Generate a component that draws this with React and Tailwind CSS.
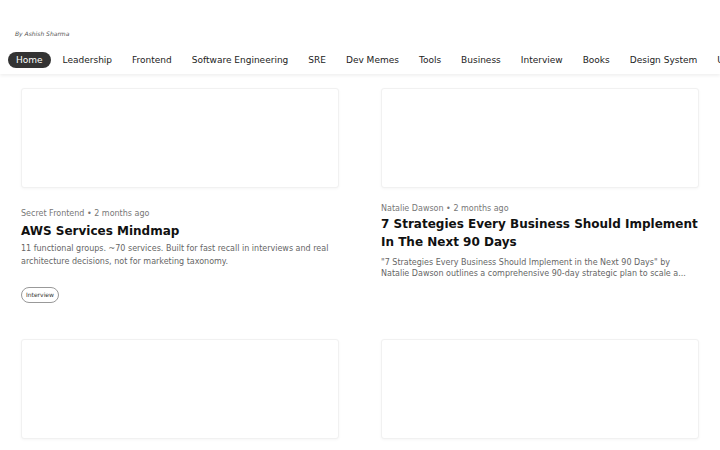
const navItems = [
  'Home',
  'Leadership',
  'Frontend',
  'Software Engineering',
  'SRE',
  'Dev Memes',
  'Tools',
  'Business',
  'Interview',
  'Books',
  'Design System',
  'UI/UX',
];

function Thumb() {
  return (
    <div className="h-[100px] w-full rounded-[3px] border border-[#f1f1f1] bg-white shadow-[0_1px_3px_rgba(0,0,0,0.04)]" />
  );
}

function App() {
  return (
    <div
      className="min-h-screen overflow-hidden bg-white text-[#1a1a1a]"
      style={{ fontFamily: '"DejaVu Sans", sans-serif' }}
    >
      <header>
        <div className="pl-[15px] pt-[30px] pb-[8px] text-[6px] leading-[8px] italic text-[#555]">
          By Ashish Sharma
        </div>
        <nav className="flex h-[28px] items-center gap-1 overflow-hidden whitespace-nowrap bg-white px-2 shadow-[0_2px_3px_rgba(0,0,0,0.06)]">
          {navItems.map((item, i) => (
            <span
              key={item}
              className={`shrink-0 rounded-full px-2 text-[9px] leading-[16px] ${
                i === 0 ? 'bg-[#333] text-white' : 'text-[#222]'
              }`}
            >
              {item}
            </span>
          ))}
        </nav>
      </header>

      <main className="grid grid-cols-[318px_318px] gap-x-[42px] gap-y-[35px] px-[21px] pt-[14px]">
        {/* row 1, left */}
        <article>
          <Thumb />
          <div className="mt-[20px] text-[8px] leading-[12px] text-[#777]">
            Secret Frontend • 2 months ago
          </div>
          <h2 className="mt-[2px] text-[12px] font-bold leading-[18px] text-[#111]">
            AWS Services Mindmap
          </h2>
          <p className="mt-[2px] text-[8px] leading-[13px] text-[#666]">
            11 functional groups. ~70 services. Built for fast recall in interviews and real architecture decisions, not for marketing taxonomy.
          </p>
          <span className="mt-[19px] inline-block rounded-full border border-[#999] px-[4px] text-[6px] leading-[14px] text-[#333]">
            Interview
          </span>
        </article>

        {/* row 1, right */}
        <article>
          <Thumb />
          <div className="mt-[15px] text-[8px] leading-[12px] text-[#777]">
            Natalie Dawson • 2 months ago
          </div>
          <h2 className="text-[12px] font-bold leading-[18px] text-[#111]">
            7 Strategies Every Business Should Implement In The Next 90 Days
          </h2>
          <p className="mt-[5.5px] whitespace-nowrap text-[8px] leading-[11px] text-[#666]">
            "7 Strategies Every Business Should Implement in the Next 90 Days" by
            <br />
            Natalie Dawson outlines a comprehensive 90-day strategic plan to scale a...
          </p>
        </article>

        {/* row 2 */}
        <article>
          <Thumb />
        </article>
        <article>
          <Thumb />
        </article>
      </main>
    </div>
  );
}

export default App;
